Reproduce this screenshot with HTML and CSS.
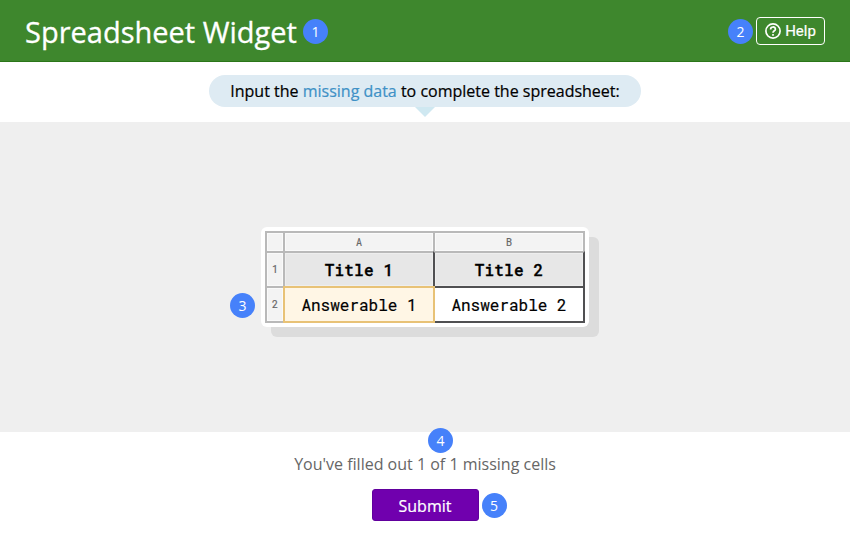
FILE: index.html
```html
<!DOCTYPE html>
<html lang="en">
<head>
<meta charset="utf-8">
<title>Spreadsheet Widget</title>
<link rel="stylesheet" href="styles.css">
</head>
<body>
<header class="header">
  <h1 class="title">Spreadsheet Widget</h1>
  <span class="marker marker-title">1</span>
  <span class="marker marker-help">2</span>
  <button class="help">
    <svg class="help-icon" viewBox="0 0 16 16" fill="none" stroke="currentColor" stroke-width="1.7"><circle cx="8" cy="8" r="7.1"/><path d="M5.6 6.4C5.6 3.2 10.4 3.2 10.4 6.2C10.4 7.8 8 7.8 8 9.8"/><path d="M8 10.9v1.8"/></svg>
    <span>Help</span>
  </button>
</header>
<section class="prompt">
  <p class="bubble"><span class="bubble-text">Input the <span class="accent">missing data</span> to complete the spreadsheet:</span></p>
</section>
<main class="stage">
  <div class="sheet">
    <div class="grid">
      <div class="cell label"></div><div class="cell label">A</div><div class="cell label">B</div>
      <div class="cell label">1</div><div class="cell heading">Title 1</div><div class="cell heading dark">Title 2</div>
      <div class="cell label">2</div><div class="cell active">Answerable 1</div><div class="cell dark">Answerable 2</div>
    </div>
    <span class="marker marker-row">3</span>
  </div>
</main>
<footer class="footer">
  <span class="marker marker-progress">4</span>
  <p class="progress">You've filled out 1 of 1 missing cells</p>
  <div class="actions">
    <button class="submit">Submit</button>
    <span class="marker marker-submit">5</span>
  </div>
</footer>
</body>
</html>
```

FILE: styles.css
```css
* { box-sizing: border-box; }
body {
  margin: 0;
  height: 550px;
  display: flex;
  flex-direction: column;
  overflow: hidden;
  background: #fff;
  font-family: "Open Sans", sans-serif;
  color: #000;
}
.header {
  height: 62px;
  flex: none;
  display: flex;
  align-items: center;
  padding: 2px 25px 0;
  background: #3e872d;
  border-bottom: 1px solid #2b7619;
  color: #fff;
}
.title { margin: 0; width: 273px; font-size: 29px; font-weight: 400; line-height: 38px; white-space: nowrap; -webkit-text-stroke: 0.3px #fff; }
.marker {
  width: 25px;
  height: 25px;
  flex: none;
  border-radius: 50%;
  background: #4681fa;
  color: #fff;
  font-size: 14px;
  line-height: 26px;
  text-align: center;
}
.marker-title { margin-left: 5px; }
.marker-help { margin-left: auto; margin-right: 3px; }
.help {
  width: 69px;
  height: 28px;
  display: flex;
  align-items: center;
  justify-content: center;
  gap: 4px;
  margin-top: -1px;
  padding: 0;
  border: 1.5px solid #fff;
  border-radius: 4px;
  background: none;
  color: #fff;
  font: 400 15px/20px Roboto, sans-serif;
  -webkit-text-stroke: 0.2px #fff;
}
.help-icon { width: 16px; height: 16px; }
.prompt {
  height: 60px;
  flex: none;
  display: flex;
  justify-content: center;
  align-items: flex-start;
  padding-top: 13px;
}
.bubble {
  position: relative;
  width: 432px;
  height: 32px;
  margin: 0;
  border-radius: 16px;
  background: #deebf3;
  font-size: 16px;
  line-height: 33px;
  text-align: center;
  white-space: nowrap;
  -webkit-text-stroke: 0.2px currentColor;
}
.bubble::after {
  content: "";
  position: absolute;
  left: 206px;
  top: 32px;
  border: 10px solid transparent;
  border-top-color: #cfe8f1;
  border-bottom: 0;
}
.accent { color: #3f91c6; }
.stage {
  height: 310px;
  flex: none;
  display: flex;
  align-items: center;
  justify-content: center;
  background: #efefef;
}
.sheet {
  position: relative;
  width: 328px;
  height: 100px;
  padding: 4px;
  border-radius: 6px;
  background: #fff;
  box-shadow: 10px 10px 0 #dcdcdc;
}
.grid {
  display: grid;
  grid-template-columns: 18px 150px 150px;
  grid-template-rows: 20px 35px 35px;
  font: 16px "Roboto Mono", "DejaVu Sans Mono", monospace;
}
.cell {
  width: calc(100% + 2px);
  height: calc(100% + 2px);
  display: flex;
  align-items: center;
  justify-content: center;
  padding-bottom: 1px;
  border: 2px solid #b9b9b9;
  background: #fff;
  -webkit-text-stroke: 0.2px currentColor;
}
.label { padding-bottom: 0; background: #f3f3f3; color: #666; font-size: 10px; box-shadow: inset 0 0 0 1px #fafafa; }
.heading { background: #e7e7e7; font-weight: 500; letter-spacing: 0.2px; box-shadow: inset 0 0 0 1px #eee; -webkit-text-stroke-width: 0.3px; }
.dark { position: relative; border-color: #505052; }
.heading.dark { border-top-color: #b9b9b9; }
.active { position: relative; z-index: 1; background: #fff6e5; border-color: #e8c276; }
.marker-row { position: absolute; left: -31px; top: 66px; }
.footer {
  position: relative;
  flex: 1;
  display: flex;
  flex-direction: column;
  align-items: center;
}
.marker-progress { position: absolute; left: 428px; top: -4px; }
.progress { margin: 21px 0 0; color: #666; font-size: 16px; line-height: 22px; }
.actions { position: relative; margin-top: 14px; }
.submit {
  display: block;
  width: 107px;
  height: 32px;
  padding: 1px 0 0;
  border: 1px solid #61009d;
  border-radius: 3px;
  background: #7000ae;
  color: #fff;
  font: 16px "Open Sans", sans-serif;
  -webkit-text-stroke: 0.2px #fff;
}
.marker-submit { position: absolute; left: 110px; top: 4px; }
```
